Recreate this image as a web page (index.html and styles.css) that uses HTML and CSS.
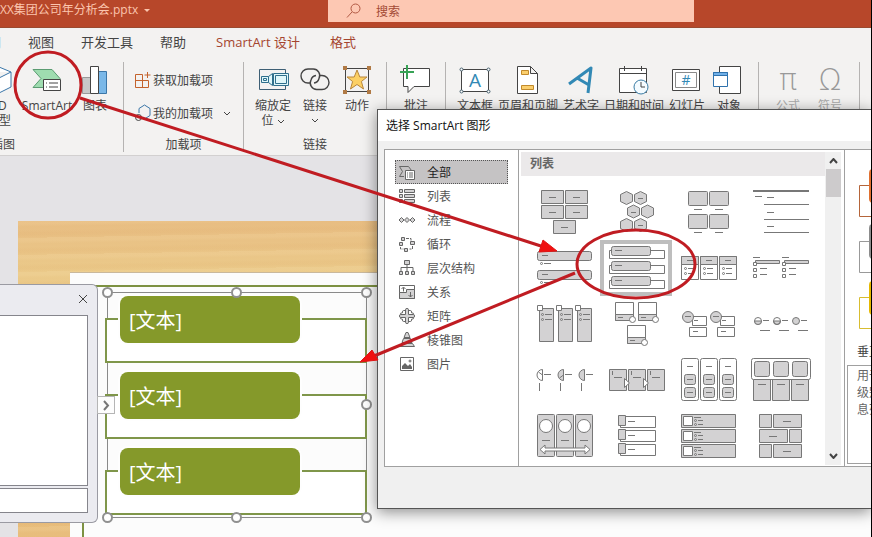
FILE: index.html
```html
<!DOCTYPE html>
<html lang="zh-CN">
<head>
  <meta charset="UTF-8">
  <meta name="viewport" content="width=device-width, initial-scale=1">
  <title>XX集团公司年分析会.pptx</title>
  <link rel="stylesheet" href="styles.css">
</head>
<body>
  <header class="titlebar">
    <div class="filename">XX集团公司年分析会.pptx <svg width="6" height="4"><path d="M0 0h6l-3 3z"/></svg></div>
    <label class="search">
      <svg width="16" height="16" viewBox="0 0 16 16"><circle cx="9.5" cy="5.5" r="4.5"/><path d="M6 9l-5 5.500"/></svg>
      <input type="text" placeholder="搜索" aria-label="搜索">
    </label>
  </header>

  <nav class="tabs">
    <a href="#">审阅</a>
    <a href="#">视图</a>
    <a href="#">开发工具</a>
    <a href="#">帮助</a>
    <a href="#" class="context">SmartArt 设计</a>
    <a href="#" class="context">格式</a>
  </nav>

  <section class="ribbon">
    <div class="group illustrations">
      <div class="tools">
        <button class="tool"><svg viewBox="0 0 32 32"><path class="blue" fill="#fff" d="M16 3l12 5v15l-12 6-12-6V8zM4 8l12 6 12-6M16 14v15"/></svg><span>3D</span><span>模型</span></button>
        <button class="tool wide"><svg viewBox="0 0 32 32"><path fill="#9fdcb0" stroke="#5b9c72" d="M2 5.500h19l8 9-8 9H2l8-9z"/><path fill="#fff" d="M12.500 15.500h17v11h-17z"/><path d="M15 19h1m2 0h9M15 23h1m2 0h9"/></svg>SmartArt</button>
        <button class="tool"><svg viewBox="0 0 32 32"><path fill="#c8c8c8" stroke="#999" d="M3.500 13.500h8v16h-8z"/><path fill="#7ab8e8" stroke="#3c77a8" d="M19.500 7.500h8v22h-8z"/><path fill="#fff" d="M11.500 2.500h8v27h-8z"/></svg>图表</button>
      </div>
      <h2>插图</h2>
    </div>
    <div class="group">
      <div class="tools rows">
        <button class="row-tool"><svg width="18" height="18" viewBox="0 0 18 18"><path stroke="#c4632d" d="M8.500 3.500h-7v13h13v-7h-13M8.500 3.500v13M13.500 1v6M10.500 4h6"/></svg>获取加载项</button>
        <button class="row-tool"><svg width="18" height="18" viewBox="0 0 18 18"><path class="blue" d="M5 9V4.500L10.500 1 16 4.500v7L10.500 15 8 13.500"/><circle cx="4.500" cy="13.500" r="3"/></svg>我的加载项<svg class="caret" width="8" height="5"><path d="M1 1l3 3 3-3"/></svg></button>
      </div>
      <h2>加载项</h2>
    </div>
    <div class="group">
      <div class="tools">
        <button class="tool"><svg viewBox="0 0 32 32"><path stroke="#3e5f75" d="M16 5.500H2.500v20h26v-4M16 5.500h12.500v4"/><path fill="#e0f7fa" stroke="#2f6f8c" d="M4.500 12.500h7v6h-7zM11.500 12.500l4-3v12l-4-3M16.500 9.500h15v12h-15z"/><path stroke="#2f6f8c" d="M6.500 14.500h3v2h-3zM18.500 11.500h11v8h-11z"/></svg><span>缩放定</span><span>位 <svg class="caret" width="8" height="5"><path d="M1 1l3 3 3-3"/></svg></span></button>
        <button class="tool"><svg viewBox="0 0 32 32"><path stroke-width="1.400" d="M12 19H9a6.500 6.500 0 0 1 0-14h5a6.500 6.500 0 0 1 6 9.500q-1 4-5 4.500M20 11.500h3a6.500 6.500 0 0 1 0 14h-5a6.500 6.500 0 0 1-6-9.500q1-4 5-4.500"/></svg><span>链接</span><svg class="caret" width="8" height="5"><path d="M1 1l3 3 3-3"/></svg></button>
        <button class="tool"><svg viewBox="0 0 32 32"><path d="M4.500 4.500h23v23h-23z"/><path fill="#b07a45" stroke="none" d="M2 2h4v4H2zM26 2h4v4h-4zM2 26h4v4H2zM26 26h4v4h-4z"/><path fill="#fcd064" stroke="#b8863b" d="M16 6l2.800 7H26l-5.600 4.500 2.100 7.500-6.500-4.500L9.500 25l2.100-7.500L6 13h7.200z"/></svg>动作</button>
      </div>
      <h2>链接</h2>
    </div>
    <div class="group">
      <div class="tools">
        <button class="tool"><svg viewBox="0 0 32 32"><path fill="#fff" d="M3.500 4.500h26v18H14l-6 6v-6H3.500z"/><path stroke="#38a356" stroke-width="2" d="M7 1v14M0 8h14"/></svg>批注</button>
      </div>
      <h2>批注</h2>
    </div>
    <div class="group texts">
      <div class="tools">
        <button class="tool"><svg viewBox="0 0 32 32"><path fill="#fff" d="M2.500 5.500h27v22h-27z"/><g fill="#fff" stroke="#46606e"><circle cx="2.500" cy="5.500" r="1.500"/><circle cx="29.500" cy="5.500" r="1.500"/><circle cx="2.500" cy="27.500" r="1.500"/><circle cx="29.500" cy="27.500" r="1.500"/></g><text x="16" y="23" font-size="19">A</text></svg>文本框</button>
        <button class="tool"><svg viewBox="0 0 32 32"><path fill="#fff" d="M5.500 2.500h13l7 7v20h-20zM18.500 2.500v7h7"/><path fill="#fbcf6d" stroke="#c28a2b" d="M9.500 6.500h7v4h-7zM9.500 21.500h12v4h-12z"/></svg>页眉和页脚</button>
        <button class="tool"><svg viewBox="0 0 32 32"><path stroke="#3289b5" stroke-width="3" stroke-linejoin="round" d="M4 20L26 4l-3 25M12 14l12 7"/></svg>艺术字</button>
        <button class="tool"><svg viewBox="0 0 32 32"><path fill="#fff" d="M1.500 4.500h27v24h-27zM1.500 9.500h27M6.500 2v5M23.500 2v5"/><circle cx="23" cy="23" r="7" fill="#f4fbff" stroke="#3a7ca5"/><path d="M23 18v5h4"/></svg>日期和时间</button>
        <button class="tool"><svg viewBox="0 0 32 32"><path fill="#fff" d="M1.500 5.500h27v21h-27z"/><path stroke="#8a8a8a" d="M4.500 8.500h21v15h-21z"/><text x="15" y="21" font-size="14">#</text></svg>幻灯片</button>
        <button class="tool"><svg viewBox="0 0 32 32"><path fill="#fff" d="M6.500 2.500h21v27h-21z"/><path fill="#fff" stroke="#2f72ad" d="M.500 8.500h14v14H.500z"/><path fill="#70b0e8" stroke="#2f72ad" d="M.500 8.500h14v3H.500z"/></svg>对象</button>
      </div>
      <h2>文本</h2>
    </div>
    <div class="group disabled">
      <div class="tools">
        <button class="tool" disabled><span class="glyph">π</span>公式</button>
        <button class="tool" disabled><span class="glyph">Ω</span>符号</button>
      </div>
      <h2>符号</h2>
    </div>
  </section>

  <main class="workspace">
    <div class="slide">
      <div class="paper"><div class="frame"></div></div>
    </div>

    <div class="smartart">
      <div class="node"><span>[文本]</span></div>
      <div class="node"><span>[文本]</span></div>
      <div class="node"><span>[文本]</span></div>
      <i class="handle top left"></i><i class="handle top center"></i><i class="handle top right"></i>
      <i class="handle middle right"></i>
      <i class="handle bottom left"></i><i class="handle bottom center"></i><i class="handle bottom right"></i>
    </div>

    <aside class="text-pane">
      <button class="close" aria-label="关闭"><svg width="10" height="10"><path d="M1 1l8 8M9 1l-8 8"/></svg></button>
      <div class="pane-text"></div>
      <div class="pane-hint"></div>
      <button class="toggle" aria-label="收起"><svg width="7" height="11"><path d="M1 1l4 4.500-4 4.500"/></svg></button>
    </aside>
  </main>

  <section class="dialog">
    <h1>选择 SmartArt 图形</h1>
    <div class="dialog-body">
      <div class="categories">
        <button class="selected"><svg viewBox="0 0 16 16"><path d="M5 12.500H.500l3-5-3-5h9l3 4"/><path class="w" d="M6.500 6.500h9v9h-9z"/><path d="M8 9h1m1 0h4M8 11h1m1 0h4M8 13h1m1 0h4"/></svg>全部</button>
        <button><svg viewBox="0 0 16 16"><path class="g" d="M.500 1.500h3v3h-3zM5.500 1.500h10v3h-10zM.500 6.500h3v3h-3zM5.500 6.500h10v3h-10zM.500 11.500h3v3h-3zM5.500 11.500h10v3h-10z"/></svg>列表</button>
        <button><svg viewBox="0 0 16 16"><path class="g" d="M0 8l2.500-2.500L5 8l-2.500 2.500zM5.500 8L8 5.500 10.500 8 8 10.500zM11 8l2.500-2.500L16 8l-2.500 2.500z"/></svg>流程</button>
        <button><svg viewBox="0 0 16 16"><path class="g" d="M2.500 1.500h3v3h-3zM11.500 5.500h4v3h-4zM5.500 12.500h3v3h-3zM.500 6.500h3v3h-3z"/><path d="M7 2.500h5v2M13.500 10v3h-3M1.500 11v2h3" stroke-dasharray="3 1"/></svg>循环</button>
        <button><svg viewBox="0 0 16 16"><path class="g" d="M5.500.500h5v4h-5zM.500 11.500h3v3h-3zM6.500 11.500h3v3h-3zM12.500 11.500h3v3h-3z"/><path d="M8 4.500v7M2 11V7.500h12V11"/></svg>层次结构</button>
        <button><svg viewBox="0 0 16 16"><path class="w" d="M.500 1.500h15v13H.500z"/><path class="g" d="M.500 8.500h7v-3h8v9H.500z"/><path d="M4.500 7.500v-4M2.500 5l2-2 2 2M11.500 8v5M9.500 11l2 2 2-2"/></svg>关系</button>
        <button><svg viewBox="0 0 16 16"><path class="g" d="M6.500 1.500v5h-5q-1 0-1 1.500t1 1.500h5v5q0 1 1.500 1t1.500-1v-5h5q1 0 1-1.500t-1-1.500h-5v-5q0-1-1.500-1t-1.500 1z"/><path d="M6.500 2.500h-2q-1 0-1 1.500t-1 1-1 1.500M9.500 2.500h2q1 0 1 1.500t1 1 1 1.500M6.500 13.500h-2q-1 0-1-1.500t-1-1-1-1.500M9.500 13.500h2q1 0 1-1.500t1-1 1-1.500"/></svg>矩阵</button>
        <button><svg viewBox="0 0 16 16"><path class="g" d="M7 .500h2l2 5H5zM4.500 6.500h7l1.500 4H3zM2.500 11.500h11l2 3H.500z"/></svg>棱锥图</button>
        <button><svg viewBox="0 0 16 16"><path class="w" d="M1.500 1.500h13v13h-13z"/><path fill="#666" stroke="none" d="M3 13V10l3-3 3 3 2-2 2 3v2z"/><circle cx="11" cy="5" r="1"/></svg>图片</button>
      </div>

      <div class="gallery">
        <div class="gallery-main">
          <h2>列表</h2>
          <div class="thumbs">
            <button aria-label="基本列表"><svg viewBox="0 0 72 56"><path class="g" d="M13.500 6.500h22v13h-22zM37.500 6.500h22v13h-22zM13.500 21.500h22v13h-22zM37.500 21.500h22v13h-22zM25.500 36.500h22v13h-22z"/><path d="M21 13.500h7M45 13.500h7M21 28.500h7M45 28.500h7M33 43.500h7"/></svg></button>
            <button aria-label="六边形群集"><svg viewBox="0 0 72 56"><path class="g" d="M26.500 7.500l6 3v7l-6 3-6-3v-7zM40.500 7.500l6 3v7l-6 3-6-3v-7zM33.500 21l6 3v7l-6 3-6-3v-7zM47.500 21l6 3v7l-6 3-6-3v-7zM26.500 34.500l6 3v7l-6 3-6-3v-7zM40.500 34.500l6 3v7l-6 3-6-3v-7z"/><path d="M38 14.500h5M31 28.500h5M38 41.500h5"/></svg></button>
            <button aria-label="图片题注列表"><svg viewBox="0 0 72 56"><g class="g"><rect x="16.500" y="7.500" width="19" height="14" rx="1"/><rect x="37.500" y="7.500" width="19" height="14" rx="1"/><rect x="16.500" y="30.500" width="19" height="14" rx="1"/><rect x="37.500" y="30.500" width="19" height="14" rx="1"/></g><path d="M22 25.500h8M43 25.500h8M22 48.500h8M43 48.500h8"/></svg></button>
            <button aria-label="线型列表"><svg viewBox="0 0 72 56"><path stroke-width="2" d="M9 7h56"/><path d="M11 12.500h7M23 13.500h7M20 20.500h45M23 28.500h7M20 35.500h45M23 42.500h7M20 48.500h45"/></svg></button>

            <button aria-label="垂直项目符号列表"><svg viewBox="0 0 72 56"><rect class="g" x="9.500" y="11.500" width="54" height="9" rx="2"/><rect class="g" x="9.500" y="30.500" width="54" height="9" rx="2"/><path d="M14 15.500h6M16 23.500h7M14 34.500h6M16 42.500h7"/><circle cx="13.500" cy="23.500" r="1"/><circle cx="13.500" cy="42.500" r="1"/></svg></button>
            <button class="selected" aria-label="垂直框列表"><svg viewBox="0 0 72 56"><path class="w" d="M9.500 10.500h55v8h-55zM9.500 25.500h55v8h-55zM9.500 40.500h55v8h-55z"/><g class="g"><rect x="11.500" y="6.500" width="39" height="9" rx="2"/><rect x="11.500" y="21.500" width="39" height="9" rx="2"/><rect x="11.500" y="36.500" width="39" height="9" rx="2"/></g><path d="M15 10.500h7M15 25.500h7M15 40.500h7"/></svg></button>
            <button aria-label="水平项目符号列表"><svg viewBox="0 0 72 56"><path class="w" d="M9.500 16.500h17v23h-17zM28.500 16.500h17v23h-17zM47.500 16.500h17v23h-17z"/><path class="g" d="M9.500 16.500h17v8h-17zM28.500 16.500h17v8h-17zM47.500 16.500h17v8h-17z"/><path d="M15 20.500h6M34 20.500h6M53 20.500h6M16 28.500h6M16 33.500h6M35 28.500h6M35 33.500h6M54 28.500h6M54 33.500h6"/><circle cx="13.500" cy="28.500" r="1"/><circle cx="13.500" cy="33.500" r="1"/><circle cx="32.500" cy="28.500" r="1"/><circle cx="32.500" cy="33.500" r="1"/><circle cx="51.500" cy="28.500" r="1"/><circle cx="51.500" cy="33.500" r="1"/></svg></button>
            <button aria-label="方形重点列表"><svg viewBox="0 0 72 56"><path class="g" d="M11.500 20.500h24v3h-24zM40.500 20.500h24v3h-24z"/><path class="w" d="M9.500 22.500h3v3h-3zM9.500 28.500h3v3h-3zM9.500 34.500h3v3h-3zM38.500 22.500h3v3h-3zM38.500 28.500h3v3h-3zM38.500 34.500h3v3h-3z"/><path d="M9 17.500h7M38 17.500h7M16 28.500h7M45 28.500h7M16 34.500h7M45 34.500h7"/></svg></button>

            <button aria-label="图片重点列表"><svg viewBox="0 0 72 56"><path class="g" d="M11.500 12.500h14v33h-14zM30.500 12.500h14v33h-14zM49.500 12.500h14v33h-14z"/><path class="w" d="M9.500 9.500h5v5h-5zM28.500 9.500h5v5h-5zM47.500 9.500h5v5h-5z"/><path d="M17 18.500h7M17 23.500h7M36 18.500h7M36 23.500h7M55 18.500h7M55 23.500h7"/><circle cx="14.500" cy="18.500" r="1"/><circle cx="14.500" cy="23.500" r="1"/><circle cx="33.500" cy="18.500" r="1"/><circle cx="33.500" cy="23.500" r="1"/><circle cx="52.500" cy="18.500" r="1"/><circle cx="52.500" cy="23.500" r="1"/></svg></button>
            <button aria-label="蛇形图片重点列表"><svg viewBox="0 0 72 56"><path class="w" d="M15.500 6.500h18v18h-18zM38.500 6.500h18v18h-18zM27.500 29.500h18v18h-18z"/><path class="g" d="M15.500 18.500h18v6h-18zM38.500 18.500h18v6h-18zM27.500 41.500h18v6h-18z"/><path d="M18 21.500h5M41 21.500h5M30 44.500h5"/><g class="w"><circle cx="32.500" cy="23.500" r="3"/><circle cx="55.500" cy="23.500" r="3"/><circle cx="44.500" cy="46.500" r="3"/></g></svg></button>
            <button aria-label="堆叠列表"><svg viewBox="0 0 72 56"><path class="w" d="M20.500 20.500h14v9h-14zM17.500 31.500h17v9h-17zM48.500 20.500h14v9h-14zM45.500 31.500h17v9h-17z"/><circle class="g" cx="16" cy="21" r="5.500"/><circle class="g" cx="44" cy="21" r="5.500"/><path d="M13 20.500h6M41 20.500h6M22 24.500h4M50 24.500h4M21 35.500h5M49 35.500h5"/></svg></button>
            <button aria-label="递增圆流程"><svg viewBox="0 0 72 56"><circle class="w" cx="14" cy="25" r="3.500"/><path class="g" d="M10.500 25h7a3.500 3.500 0 0 1-7 0zM29.500 25h7a3.500 3.500 0 0 1-7 0z"/><circle cx="33" cy="25" r="3.500"/><circle class="g" cx="52" cy="25" r="3.500"/><path d="M19 24.500h6M38 24.500h6M57 24.500h6M16 34.500h10M35 34.500h10M54 34.500h10"/></svg></button>

            <button aria-label="饼图流程"><svg viewBox="0 0 72 56"><path class="w" d="M14.500 17.500v11a5.500 5.500 0 0 1 0-11z"/><path class="g" d="M35.500 17.500v11a5.500 5.500 0 0 1 0-11zM56.500 17.500v11a5.500 5.500 0 0 1 0-11z"/><path d="M14.500 23l-4-3M35.500 23l-4 3M16 22.500h7M37 22.500h7M58 22.500h7M11.500 31v8M32.500 31v8M53.500 31v8"/></svg></button>
            <button aria-label="详细流程"><svg viewBox="0 0 72 56"><path class="g" d="M9.500 17.500h17v21h-17zM28.500 17.500h17v21h-17zM47.500 17.500h17v21h-17z"/><path class="w" d="M24.500 26.500l5 4.500-5 4.500zM43.500 26.500l5 4.500-5 4.500z"/><path d="M12.500 19v4M31.500 19v4M50.500 19v4M14 25.500h8M33 25.500h8M52 25.500h8"/></svg></button>
            <button aria-label="分组列表"><svg viewBox="0 0 72 56"><g class="w"><rect x="9.500" y="6.500" width="17" height="42" rx="2"/><rect x="28.500" y="6.500" width="17" height="42" rx="2"/><rect x="47.500" y="6.500" width="17" height="42" rx="2"/></g><g class="g"><rect x="12.500" y="22.500" width="11" height="10" rx="2"/><rect x="31.500" y="22.500" width="11" height="10" rx="2"/><rect x="50.500" y="22.500" width="11" height="10" rx="2"/><rect x="12.500" y="35.500" width="11" height="10" rx="2"/><rect x="31.500" y="35.500" width="11" height="10" rx="2"/><rect x="50.500" y="35.500" width="11" height="10" rx="2"/></g><path d="M15 14.500h6M34 14.500h6M53 14.500h6M15 27.500h6M34 27.500h6M53 27.500h6M15 40.500h6M34 40.500h6M53 40.500h6"/></svg></button>
            <button aria-label="水平图片列表"><svg viewBox="0 0 72 56"><path class="g" d="M9.500 27.500h17v21h-17zM28.500 27.500h17v21h-17zM47.500 27.500h17v21h-17z"/><rect class="w" x="7.500" y="6.500" width="59" height="21" rx="2"/><g class="g"><rect x="10.500" y="9.500" width="15" height="15" rx="2"/><rect x="29.500" y="9.500" width="15" height="15" rx="2"/><rect x="48.500" y="9.500" width="15" height="15" rx="2"/></g><path d="M14 32.500h8M33 32.500h8M52 32.500h8"/></svg></button>

            <button aria-label="连续图片列表"><svg viewBox="0 0 72 56"><g class="g"><rect x="9.500" y="6.500" width="17" height="42" rx="1"/><rect x="28.500" y="6.500" width="17" height="42" rx="1"/><rect x="47.500" y="6.500" width="17" height="42" rx="1"/></g><g class="w"><circle cx="18" cy="18" r="6.500"/><circle cx="37" cy="18" r="6.500"/><circle cx="56" cy="18" r="6.500"/><path d="M12 41.500l5-4.500v3h40v-3l5 4.500-5 4.500v-3H17v3z"/></g><path d="M14 32.500h8M33 32.500h8M52 32.500h8"/></svg></button>
            <button aria-label="垂直图片列表"><svg viewBox="0 0 72 56"><path class="w" d="M20.500 8.500h35v11h-35zM20.500 22.500h35v11h-35zM20.500 36.500h35v11h-35z"/><path class="g" d="M18.500 7.500h7v10h-7zM18.500 21.500h7v10h-7zM18.500 35.500h7v10h-7z"/><path d="M28 13.500h7M28 27.500h7M28 41.500h7"/></svg></button>
            <button aria-label="垂直图片重点列表"><svg viewBox="0 0 72 56"><path class="g" d="M9.500 6.500h54v13h-54zM9.500 21.500h54v13h-54zM9.500 36.500h54v13h-54z"/><path class="w" d="M11.500 8.500h9v9h-9zM11.500 23.500h9v9h-9zM11.500 38.500h9v9h-9z"/><path d="M22 9.500h7M26 12.500h5M26 16.500h5M22 24.500h7M26 27.500h5M26 31.500h5M22 39.500h7M26 42.500h5M26 46.500h5"/><circle cx="23.500" cy="12.500" r="1"/><circle cx="23.500" cy="16.500" r="1"/><circle cx="23.500" cy="27.500" r="1"/><circle cx="23.500" cy="31.500" r="1"/><circle cx="23.500" cy="42.500" r="1"/><circle cx="23.500" cy="46.500" r="1"/></svg></button>
            <button aria-label="交替图片块"><svg viewBox="0 0 72 56"><path class="g" d="M15.500 6.500h12v13h-12zM29.500 6.500h28v13h-28zM15.500 21.500h28v13h-28zM45.500 21.500h12v13h-12zM15.500 36.500h12v13h-12zM29.500 36.500h28v13h-28z"/><path d="M39 13.500h8M25 28.500h8M39 43.500h8"/></svg></button>
          </div>
        </div>
        <div class="scrollbar">
          <svg width="9" height="6"><path d="M1 5l3.500-4L8 5"/></svg>
          <div class="scroll-thumb"></div>
          <svg width="9" height="6"><path d="M1 1l3.500 4L8 1"/></svg>
        </div>
      </div>

      <div class="preview">
        <svg class="preview-art" width="72" height="180" viewBox="0 0 72 180">
          <path stroke="#b5653a" d="M1.500 35.500h60v31h-60z"/><rect x="11" y="19" width="48" height="34" rx="4" fill="#e07030"/>
          <path stroke="#999" d="M1.500 91.500h60v31h-60z"/><rect x="11" y="74" width="48" height="35" rx="4" fill="#8c8c8c"/>
          <path stroke="#d8bd30" d="M1.500 147.500h60v31h-60z"/><rect x="11" y="131" width="48" height="34" rx="4" fill="#e5b800"/>
        </svg>
        <h3>垂直框列表</h3>
        <p>用于<br>级别<br>息列</p>
      </div>
    </div>
  </section>

  <svg class="annotations">
    <ellipse cx="48" cy="85" rx="33" ry="33"/>
    <path d="M80 98l464 149M575 273L374 356"/>
    <ellipse cx="636" cy="264" rx="59" ry="34"/>
    <path class="head" d="M557 251l-14-11-4 12zM360 362l12-12 6 10z"/>
  </svg>
</body>
</html>
```

FILE: styles.css
```css
* { box-sizing:border-box; }
body { margin:0; height:100vh; overflow:hidden; position:relative; display:flex; flex-direction:column; border-right:1px solid #000; background:#e4e3e6; color:#444; font:12px/15px "Open Sans", "Noto Sans CJK SC", sans-serif; }
button { border:0; padding:0; background:none; font:inherit; color:inherit; }
svg { fill:none; stroke:#444; flex:none; }
h1, h2, h3, p { margin:0; font-size:12px; font-weight:normal; }

.titlebar { display:flex; height:28px; background:#b7472a; border-bottom:1px solid #9a4a30; color:#fbc5ae; }
.filename { flex:0 0 328px; line-height:19px; white-space:nowrap; }
.filename svg { fill:#fbc5ae; stroke:none; margin-left:3px; vertical-align:middle; }
.search { display:flex; align-items:center; width:42%; height:22px; padding-left:18px; gap:14px; background:#fdc8b3; }
.search svg { stroke:#b25a44; }
.search input { flex:1; min-width:0; border:0; padding:0; background:none; font:inherit; color:#a34a35; }
.search input::placeholder { color:#a34a35; }

.tabs { display:flex; gap:27px; height:28px; margin-left:-25px; align-items:center; background:#f3f2f1; font-size:13px; }
.tabs a { color:#444; text-decoration:none; white-space:nowrap; }
.tabs .context { margin-left:3px; color:#a5452f; }
.tabs, .ribbon { flex-shrink:0; }

.ribbon { display:flex; padding:6px 0 3px; background:#f3f2f1; border-bottom:1px solid #d2d0d0; }
.group { display:flex; flex-direction:column; height:90px; padding:2px 8px 0; border-right:1px solid #b5b3b2; flex:none; }
.group h2 { margin-top:auto; text-align:center; line-height:15px; }
.illustrations { width:241px; margin-left:-117px; }
.illustrations .tools { justify-content:flex-end; }
.tools { display:flex; }
.tool { display:flex; flex-direction:column; align-items:center; min-width:42px; padding:0 3px; white-space:nowrap; }
.illustrations .tool { min-width:40px; }
.texts .tool { padding:0 2px; }
.tool.wide { width:56px; }
.tool > svg:first-child { width:32px; height:32px; margin-bottom:2px; }
.tool text { fill:#3289b5; stroke:none; text-anchor:middle; font-family:"Open Sans", sans-serif; }
.blue { stroke:#3a76a8; }
.caret { vertical-align:middle; }
.tool > .caret { margin-top:5px; }
.rows { flex-direction:column; gap:1px; padding-left:2px; }
.row-tool { display:flex; align-items:center; height:32px; gap:1px; white-space:nowrap; }
.row-tool .caret { margin:0 4px 0 9px; }
.disabled { color:#aaa; }
.glyph { height:32px; margin-bottom:2px; font:200 30px/32px "DejaVu Sans", sans-serif; color:#999; }

.workspace { position:relative; flex:1; overflow:hidden; }
.slide { position:absolute; left:18px; top:65px; right:0; bottom:0; padding:51px 0 0 52px; background:repeating-linear-gradient(179deg, rgba(255,235,190,.12) 0 3px, transparent 6px 9px, rgba(205,130,60,.05) 12px 14px, transparent 17px), linear-gradient(#e8bd82, #ebca8a 52px, #e8bd7c); }
.paper { height:100%; padding:12px 0 0 12px; background:#fcfcfc; border-top:1px solid #c9b89c; }
.frame { height:100%; border:solid #7d9142; border-width:2px 0 0 2px; }

/* selected SmartArt object on the slide */
.smartart { position:absolute; left:107px; top:136px; width:260px; height:226px; border:1px solid #8a8a8a; }
.node { height:45px; margin:25px -1px 31px -3px; border:2px solid #7f964a; background:#fff; }
.node span { display:block; width:180px; height:47px; margin:-24px 0 0 13px; padding-left:9px; border-radius:8px; background:#85992a; box-shadow:0 0 0 2px #fefefe; color:#fff; font-size:20px; line-height:49px; }
.handle { position:absolute; width:11px; height:11px; border:2px solid #909090; border-radius:50%; background:#fff; }
.handle.left { left:-6px; }
.handle.center { left:calc(50% - 6px); }
.handle.right { right:-6px; }
.handle.top { top:-6px; }
.handle.middle { top:calc(50% - 6px); }
.handle.bottom { bottom:-6px; }

.text-pane { position:absolute; left:0; top:128px; width:98px; height:239px; display:flex; flex-direction:column; gap:2px; padding:0 9px 9px 0; border:1px solid #9a9aa2; border-left:0; border-radius:0 6px 6px 0; background:#ebebf0; }
.close { align-self:flex-end; height:28px; }
.close svg, .toggle svg { display:block; }
.pane-text { flex:1; border:1px solid #85858c; border-left:0; background:#fff; }
.pane-hint { height:25px; border:1px solid #85858c; border-left:0; background:#fff; }
.toggle { position:absolute; left:97px; top:111px; width:18px; height:18px; padding:0 5px; border:1px solid #b5b5b5; background:#fdfdfd; }
.toggle svg { stroke:#777; stroke-width:2; }

.dialog { position:absolute; left:377px; top:109px; right:0; border:1px solid #555; border-right:0; background:#f0f0f0; box-shadow:0 3px 14px rgba(0,0,0,.45); }
.dialog h1 { padding:0 8px; background:#fff; color:#111; line-height:31px; }
.dialog-body { display:grid; grid-template-columns:134px 1fr 26px; height:318px; margin:8px 0 41px 6px; border:1px solid #a0a0a0; border-right:0; background:#fff; }
.categories { padding:10px 10px 0; border-right:1px solid #a0a0a0; }
.categories button { display:flex; align-items:center; gap:12px; width:100%; height:24px; padding-left:4px; color:#555; }
.categories svg { width:16px; height:16px; stroke:#666; }
.categories .selected { background:#c5c3c4; outline:1px dotted #555; outline-offset:-1px; color:#222; }
.g { fill:#d3d2d3; }
.w { fill:#fff; }

.gallery { display:flex; min-width:0; padding:2px 3px 1px 2px; border-right:1px solid #a0a0a0; }
.gallery-main { flex:1; min-width:0; }
.gallery h2 { height:24px; padding-left:9px; margin-bottom:8px; background:#ebe9ea; line-height:24px; font-weight:bold; color:#666; }
.thumbs { display:grid; grid-template-columns:repeat(4, 72px); grid-auto-rows:56px; padding-left:7px; }
.thumbs svg { display:block; width:72px; height:56px; stroke:#777; }
.thumbs .selected { box-shadow:inset 0 0 0 4px #bebebe; }
.scrollbar { display:flex; flex-direction:column; align-items:center; width:16px; padding:6px 0; background:#f0f0f0; }
.scrollbar svg { stroke:#444; stroke-width:2; }
.scroll-thumb { width:15px; height:28px; margin:5px 0 auto; background:#cdcbcc; }

.preview { overflow:hidden; white-space:nowrap; }
.preview-art { display:block; margin-left:13px; }
.preview-art rect { stroke:none; }
.preview h3 { margin:14px 0 6px 12px; line-height:15px; }
.preview p { height:99px; margin-left:2px; padding:1px 9px; border:1px solid #a0a0a0; border-right:0; line-height:17px; color:#666; }

/* red circles and arrows drawn above everything */
.annotations { position:absolute; left:0; top:0; width:100%; height:100%; stroke:#c01c22; stroke-width:3; pointer-events:none; }
.annotations .head { fill:#f01010; stroke:#e01515; stroke-width:1; }
```
